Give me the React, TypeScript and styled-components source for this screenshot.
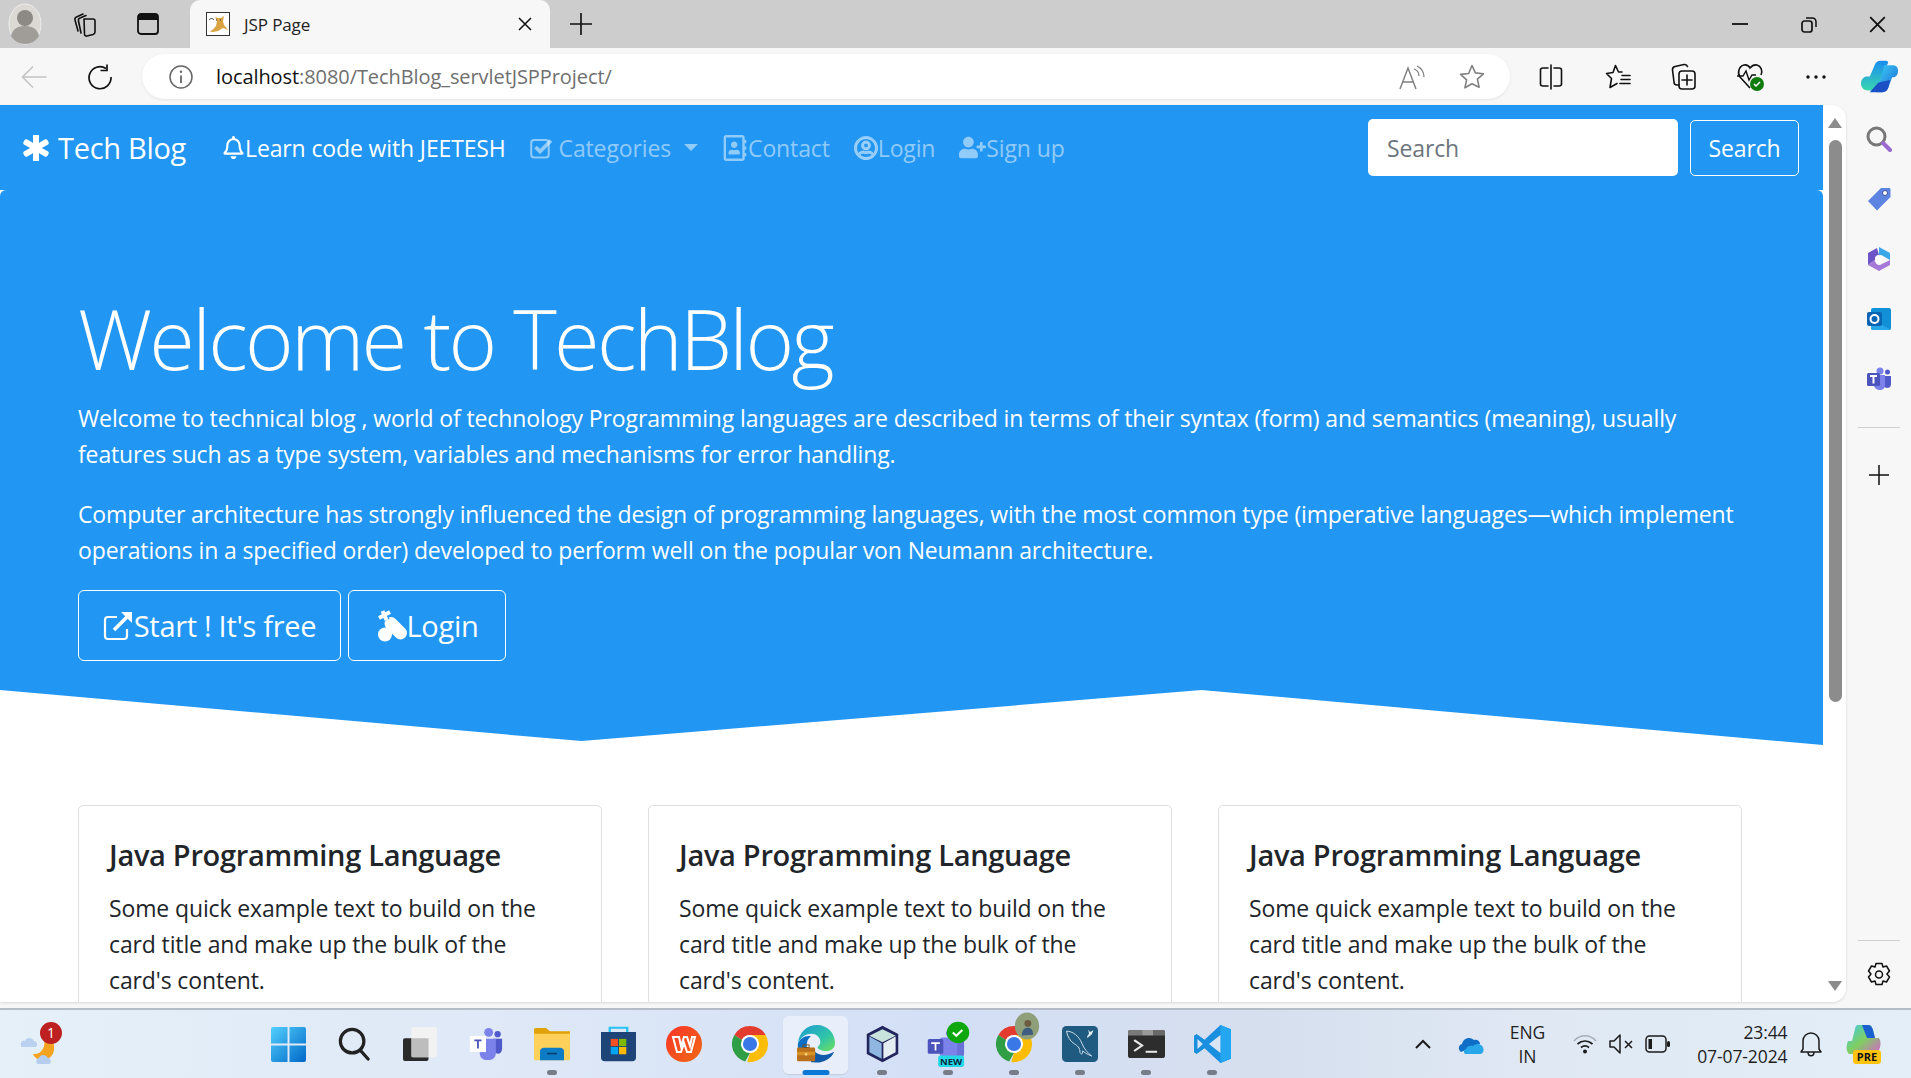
import React from "react";
import styled, { createGlobalStyle } from "styled-components";
import { FaAsterisk, FaRegBell, FaRegAddressBook, FaRegUserCircle, FaUserPlus } from "react-icons/fa";

const Global = createGlobalStyle`
  html, body { margin: 0; padding: 0; width: 100%; height: 100%; overflow: hidden; }
  body { font-family: "Open Sans", "Noto Sans", "Liberation Sans", sans-serif; color: #212529; }
  * { box-sizing: border-box; }
`;

const Screen = styled.div`
  width: 1911px; height: 1078px; display: flex; flex-direction: column; background: #f7f7f7; overflow: hidden;
`;

/* ---------- browser chrome ---------- */
const TitleBar = styled.div`
  height: 48px; flex: none; background: #cdcdcd; display: flex; align-items: center;
`;
const Slot = styled.div<{ $w?: number }>`
  width: ${p => p.$w ?? 66}px; flex: none; display: flex; align-items: center; justify-content: center; height: 100%; position: relative;
`;
const Tab = styled.div`
  width: 360px; height: 48px; margin-left: 8px; background: #f7f7f7; border-radius: 10px 10px 0 0; display: flex; align-items: center; padding: 0 18px 0 16px; gap: 14px; flex: none;
`;
const TabTitle = styled.span`
  font-size: 17px; letter-spacing: -.1px; flex: 1; color: #222;
`;
const Spacer = styled.div`
  flex: 1;
`;
const Toolbar = styled.div`
  height: 57px; flex: none; background: #f7f7f7; display: flex; align-items: center; padding-left: 1px;
`;
const AddressBar = styled.div`
  width: 1368px; height: 45px; margin-left: 9px; margin-right: 8px; background: #fff; border-radius: 23px; display: flex; align-items: center; padding: 0 0 0 27px; box-shadow: 0 1px 3px rgba(0,0,0,.08); flex: none;
`;
const Url = styled.div`
  margin-left: 23px; font-size: 20px; letter-spacing: -.08px; color: #111; flex: 1;
  span { color: #6f6f6f; }
`;

/* ---------- page ---------- */
const Body = styled.div`
  flex: 1; display: flex; min-height: 0; padding-bottom: 6px;
`;
const Viewport = styled.div`
  width: 1846px; flex: none; background: #fff; border-radius: 0 14px 14px 0; display: flex; overflow: hidden; box-shadow: 0 1px 3px rgba(0,0,0,.12);
`;
const Page = styled.div`
  width: 1823px; flex: none; overflow: hidden;
`;
const Navbar = styled.nav`
  height: 85px; background: #2196f3; display: flex; align-items: center; padding: 0 24px 0 23px;
`;
const Brand = styled.a`
  display: flex; align-items: center; gap: 9px; color: #fff; font-size: 29px; letter-spacing: -.3px; margin-right: 36px;
  svg { stroke: #fff; stroke-width: 34px; }
`;
const NavItem = styled.a<{ $active?: boolean }>`
  display: flex; align-items: center; color: ${p => (p.$active ? "#fff" : "rgba(255,255,255,.5)")}; font-size: 23px; letter-spacing: -.13px; margin-right: 24px; white-space: nowrap;
  svg { flex: none; }
`;
const Caret = styled.i`
  width: 0; height: 0; margin-left: 13px; border-left: 7px solid transparent; border-right: 7px solid transparent; border-top: 7px solid rgba(255,255,255,.5);
`;
const SearchInput = styled.div`
  width: 310px; height: 57px; background: #fff; border-radius: 5px; color: #6c757d; font-size: 23px; letter-spacing: -.13px; display: flex; align-items: center; padding-left: 19px; margin-left: auto;
`;
const SearchButton = styled.button`
  width: 109px; height: 56px; margin-left: 12px; background: transparent; border: 1px solid #fff; border-radius: 5px; color: #fff; font: inherit; font-size: 23px; letter-spacing: -.13px; padding: 0;
`;
const Hero = styled.header`
  height: 555px; background: #2196f3; padding: 95px 78px 0; border-radius: 6px 6px 0 0; color: #fff;
  clip-path: polygon(0 0, 100% 0, 100% 100%, 65.9% 90.1%, 31.9% 99.3%, 0 90.1%);
`;
const HeroTitle = styled.h1`
  margin: 0 0 10px; font-weight: 300; font-size: 83px; line-height: 105px; letter-spacing: -2.7px; white-space: nowrap;
`;
const Lead = styled.p`
  margin: 0 0 24px; font-size: 23px; line-height: 36px; letter-spacing: -.13px; width: 1667px;
`;
const Actions = styled.div`
  display: flex; gap: 7px; margin-top: -2px;
`;
const HeroButton = styled.button<{ $w: number }>`
  width: ${p => p.$w}px; height: 71px; background: transparent; border: 1px solid #fff; border-radius: 6px; color: #fff; font: inherit; font-size: 29px; letter-spacing: -.3px; display: flex; align-items: center; justify-content: center; padding: 0;
`;
const Cards = styled.section`
  display: grid; grid-template-columns: repeat(3, 524px); gap: 46px; padding: 60px 0 0 78px;
`;
const Card = styled.article`
  height: 300px; border: 1px solid rgba(0,0,0,.125); border-radius: 5px; padding: 32px 34px 30px 30px;
`;
const CardTitle = styled.h5`
  margin: 0 0 19px; font-size: 29px; line-height: 33px; font-weight: 600; letter-spacing: -.3px; color: #212529; white-space: nowrap;
`;
const CardText = styled.p`
  margin: 0; font-size: 23px; line-height: 36px; letter-spacing: -.13px; color: #212529;
`;

const Scrollbar = styled.div`
  flex: 1; display: flex; flex-direction: column; align-items: center; padding: 13px 0 11px 1px;
`;
const Thumb = styled.div`
  width: 13px; height: 562px; background: #8c8c8c; border-radius: 7px; margin-top: 12px;
`;
const Arrow = styled.i<{ $down?: boolean }>`
  width: 0; height: 0; border-left: 7.5px solid transparent; border-right: 7.5px solid transparent;
  ${p => (p.$down ? "border-top: 10px solid #8c8c8c; margin-top: auto;" : "border-bottom: 10px solid #8c8c8c;")}
`;
const Sidebar = styled.aside`
  flex: 1; display: flex; flex-direction: column; align-items: center; padding-top: 4px;
`;
const SideSlot = styled.div<{ $h?: number }>`
  height: ${p => p.$h ?? 60}px; width: 100%; flex: none; display: flex; align-items: center; justify-content: center;
`;
const SideRule = styled.div<{ $tight?: boolean }>`
  width: 42px; height: 1px; background: #d0d0d0; flex: none; margin: ${p => (p.$tight ? "0 0 7px" : "18px 0 17px")};
`;
const SideFill = styled.div`
  flex: 1;
`;

/* ---------- taskbar ---------- */
const Taskbar = styled.footer`
  height: 70px; flex: none; border-top: 2px solid #b4bcc8; background: linear-gradient(90deg, #e6f0f9 0%, #dfe9f7 25%, #d3dff6 50%, #d6dfee 66%, #dfe8f3 80%, #e3eef8 100%); display: flex; align-items: center; position: relative;
`;
const Weather = styled.div`
  width: 255px; flex: none; height: 100%; display: flex; align-items: center; padding-left: 21px;
`;
const Apps = styled.div`
  display: flex; height: 100%; flex: none;
`;
const App = styled.div<{ $active?: boolean; $open?: boolean }>`
  width: 66px; height: 100%; flex: none; display: flex; align-items: center; justify-content: center; position: relative;
  ${p => p.$active ? "&::before { content: ''; position: absolute; left: 0; top: 6px; width: 65px; height: 58px; border-radius: 6px; background: rgba(255,255,255,.45); box-shadow: 0 1px 1px rgba(0,0,0,.1); }" : ""}
  ${p => p.$open ? `&::after { content: ''; position: absolute; bottom: 3px; left: 50%; transform: translateX(-50%); height: 5px; border-radius: 3px; width: ${p.$active ? 27 : 10}px; background: ${p.$active ? "#0a78d4" : "#777d88"}; }` : ""}
  svg { position: relative; z-index: 1; }
`;
const Tray = styled.div`
  margin-left: auto; display: flex; align-items: center; height: 100%; padding-right: 16.5px; color: #1b1b1b;
`;
const TrayText = styled.div<{ $align: string; $w: number }>`
  width: ${p => p.$w}px; text-align: ${p => p.$align}; font-size: 17.5px; line-height: 24px; flex: none; color: #1f1f1f; letter-spacing: -.1px;
`;
const TraySlot = styled.div<{ $w: number }>`
  width: ${p => p.$w}px; flex: none; display: flex; align-items: center; justify-content: center;
`;
const ProfileBadge = styled.span`
  position: relative; width: 38px; height: 38px; display: block;
  svg + svg { position: absolute; left: 19px; top: -13px; }
`;

/* ---------- icons ---------- */
const ln = { fill: "none", stroke: "#111", strokeWidth: 1.6, strokeLinecap: "round", strokeLinejoin: "round" } as const;

const Avatar = () => (
  <svg width="34" height="42" viewBox="0 0 34 42">
    <ellipse cx="17" cy="21" rx="16" ry="20" fill="#dcd9d4" stroke="#eee" />
    <circle cx="17" cy="15" r="8" fill="#8d8a86" />
    <path d="M3 33c2-8 8-10 14-10s12 2 14 10c-3 5-8 8-14 8S6 38 3 33z" fill="#a09d99" />
  </svg>
);
const Collections = () => (
  <svg width="26" height="26" viewBox="0 0 26 26"><g {...ln}>
    <path d="M6 20 3 9c-.4-1.500.3-2.500 1.500-3L11 3" /><path d="M9 22 6.500 10c-.4-1.500.3-2.500 1.500-3l6-2.500" /><path d="M12 8h9c1.500 0 2 1 2 2v11c0 1-.6 2-2 2.500L15 25c-1.500.2-2.500-.5-2.500-2z" />
  </g></svg>
);
const TabView = () => (
  <svg width="22" height="22" viewBox="0 0 22 22"><rect x="1" y="1" width="20" height="20" rx="3" fill="none" stroke="#111" strokeWidth="1.800" /><path d="M1 3.500C1 2 2 1 3.500 1h15C20 1 21 2 21 3.500V7H1z" fill="#111" /></svg>
);
const Tomcat = () => (
  <svg width="24" height="24" viewBox="0 0 24 24">
    <rect x=".5" y=".5" width="23" height="23" fill="#fff" stroke="#333" />
    <path d="M2 19c4 1 6-3 8-5l1-5-2-4 3 1h3l3-2-1 5 1 4 4 5-5-2-5 3-5 1z" fill="#d9a441" />
    <path d="M3 8c2-2 4-2 5 0M10 8h1M14 8h1" stroke="#333" fill="none" />
  </svg>
);
const Close = ({ s = 14 }: { s?: number }) => (
  <svg width={s} height={s} viewBox="0 0 14 14"><path d="M1 1l12 12M13 1 1 13" stroke="#111" strokeWidth="1.500" fill="none" /></svg>
);
const Plus = ({ s = 20 }: { s?: number }) => (
  <svg width={s} height={s} viewBox="0 0 20 20"><path d="M10 0v20M0 10h20" stroke="#111" strokeWidth="1.500" /></svg>
);
const Minimize = () => <svg width="16" height="4" viewBox="0 0 16 4"><path d="M0 2h16" stroke="#111" strokeWidth="1.800" /></svg>;
const Restore = () => (
  <svg width="16" height="17" viewBox="0 0 16 17"><rect x="1" y="5" width="10" height="11" rx="2.500" fill="none" stroke="#111" strokeWidth="1.700" /><path d="M5 2h6c2.500 0 4 1.500 4 4v5" fill="none" stroke="#111" strokeWidth="1.500" /></svg>
);
const Back = () => (
  <svg width="26" height="24" viewBox="0 0 26 24"><path d="M1.500 12h24M12 1.500 1.500 12 12 22.500" fill="none" stroke="#c4c4c4" strokeWidth="1.600" /></svg>
);
const Refresh = () => (
  <svg width="26" height="26" viewBox="0 0 26 26"><path d="M19 4.500A11 11 0 1 0 24 13" fill="none" stroke="#111" strokeWidth="1.700" /><path d="M20 .5v6h-6.500" fill="none" stroke="#111" strokeWidth="1.700" /></svg>
);
const Info = () => (
  <svg width="24" height="24" viewBox="0 0 24 24"><circle cx="12" cy="12" r="11" fill="none" stroke="#666" strokeWidth="1.500" /><path d="M12 10.500V18" stroke="#666" strokeWidth="1.800" /><circle cx="12" cy="6.800" r="1.200" fill="#666" /></svg>
);
const ReadAloud = () => (
  <svg width="26" height="26" viewBox="0 0 26 26"><path d="M1 25 9 4l8 21M4 18h10" fill="none" stroke="#808080" strokeWidth="1.500" /><path d="M15 5c3 1 5 4 5 7M18 2c4 2 7 6 7 11" fill="none" stroke="#808080" strokeWidth="1.300" /></svg>
);
const Star = ({ c = "#808080" }: { c?: string }) => (
  <svg width="26" height="25" viewBox="0 0 26 25"><path d="m13 1.500 3.400 7.400 8 .9-6 5.400 1.700 8L13 19.700 5.900 23.800l1.700-8-6-5.400 8-.9z" fill="none" stroke={c} strokeWidth="1.600" strokeLinejoin="round" /></svg>
);
const Split = () => (
  <svg width="24" height="26" viewBox="0 0 24 26"><g {...ln}><path d="M12 1v24" /><path d="M9 4H4C2 4 1.500 5 1.500 6v14c0 1 .5 2 2.500 2h5M15 4h5c2 0 2.500 1 2.500 2v14c0 1-.5 2-2.500 2h-5" /></g></svg>
);
const Favorites = () => (
  <svg width="26" height="26" viewBox="0 0 26 26"><g {...ln}><path d="M17 8h-3.500L10.500 1.500 8 8.500l-6.500 1 5 5L5 23.500l7-4" /><path d="M17 11.500h8M16 15.500h9M15 19.500h10" /></g></svg>
);
const CollectionsAdd = () => (
  <svg width="26" height="28" viewBox="0 0 26 28"><g {...ln}><path d="M8 22H6c-2 0-3-1-3-3L1.500 7c-.2-2 .5-3 2.500-3.500l9-2c2-.3 3 .5 3.500 2" /><rect x="8" y="8" width="16" height="18" rx="3" /><path d="M16 12v10M11 17h10" /></g></svg>
);
const Health = () => (
  <svg width="30" height="30" viewBox="0 0 30 30">
    <path d="M14 26 4 15C1 11 3 4 8 3c3-.5 5 1 6 3 2-2.500 4-3.500 7-3 4 1 6 6 4 10" fill="none" stroke="#111" strokeWidth="1.600" />
    <path d="M1 14h6l3-5 3 9 3-5h4" fill="none" stroke="#111" strokeWidth="1.400" />
    <circle cx="21" cy="22" r="7" fill="#107c10" /><path d="m18 22 2 2 4-4" fill="none" stroke="#fff" strokeWidth="1.500" />
  </svg>
);
const Dots = () => <svg width="20" height="4" viewBox="0 0 20 4"><circle cx="2" cy="2" r="1.700" fill="#111" /><circle cx="10" cy="2" r="1.700" fill="#111" /><circle cx="18" cy="2" r="1.700" fill="#111" /></svg>;
const Copilot = () => (
  <svg width="37" height="33" viewBox="0 0 38 38" preserveAspectRatio="none">
    <defs>
      <linearGradient id="cpa" x1="0" y1="0" x2="0" y2="1"><stop offset="0" stopColor="#1a8cf0" /><stop offset="1" stopColor="#3ad6b0" /></linearGradient>
      <linearGradient id="cpb" x1="0" y1="0" x2="1" y2="1"><stop offset="0" stopColor="#3fd0f5" /><stop offset="1" stopColor="#1767d6" /></linearGradient>
    </defs>
    <path d="M26 1h-6c-3 0-5 2-6 5L9 19H5c-3 1-5 4-5 8 0 5 3 8 7 8h5l6-6 4-12 6-14c-.5-1-1-2-2-2z" fill="url(#cpa)" />
    <path d="M16 37h6c3 0 5-2 6-5l4-12h2c2-1 4-3 4-8 0-4-2-6-6-6h-8l-4 16z" fill="url(#cpb)" />
    <path d="M9 37h13c3 0 5-2 6-5l2-9-12 3-5 6z" fill="#1c4fc4" />
  </svg>
);

const SearchColor = () => (
  <svg width="26" height="26" viewBox="0 0 26 26"><circle cx="10.500" cy="10.500" r="8.500" fill="none" stroke="#777" strokeWidth="3" /><path d="m17 17 7 7" stroke="#9a6ad0" strokeWidth="4" strokeLinecap="round" /></svg>
);
const TagIcon = () => (
  <svg width="24" height="24" viewBox="0 0 24 24"><path d="M1 14 14 1h8c1 0 1.500.5 1.500 1.500V10L10 23.500z" fill="#5c84e0" /><circle cx="18" cy="6" r="2.500" fill="#fff" stroke="#3d4f9c" /></svg>
);
const M365 = () => (
  <svg width="24" height="26" viewBox="0 0 24 26">
    <path d="M12 1 23 7v7l-7-4a5 5 0 0 0-4-1z" fill="#3aa8e8" /><path d="M1 7l9-5 2 7c-3 1-4 3-4 5l-7 5z" fill="#6d55c8" /><path d="M1 19l7-5c0 3 2 5 5 5l10-5v5l-11 6z" fill="#a679d9" /><circle cx="12" cy="13" r="4" fill="#fff" />
  </svg>
);
const Outlook = () => (
  <svg width="24" height="24" viewBox="0 0 24 24"><rect x="4" y="1" width="20" height="22" rx="2" fill="#1190d8" /><path d="M4 12 24 23H6c-1 0-2-1-2-2z" fill="#28a8ea" /><rect x="0" y="5" width="15" height="14" rx="2" fill="#0a64b4" /><circle cx="7.500" cy="12" r="4" fill="none" stroke="#fff" strokeWidth="2" /></svg>
);
const TeamsSide = () => (
  <svg width="24" height="24" viewBox="0 0 24 24"><circle cx="13" cy="4" r="3.500" fill="#7b83eb" /><circle cx="20.500" cy="5" r="2.500" fill="#5059c9" /><path d="M17 9h7v8c0 3-2 4-4 4l-3-1z" fill="#5059c9" /><path d="M7 8h11v10c0 3-2 5-5 5s-6-2-6-5z" fill="#7b83eb" /><rect x="0" y="6" width="13" height="13" rx="1.500" fill="#4b53bc" /><path d="M3 9h7M6.500 9v7.500" stroke="#fff" strokeWidth="2" /></svg>
);
const Gear = () => (
  <svg width="24" height="26" viewBox="0 0 24 26"><g {...ln} strokeWidth="1.500"><path d="M9 1.500h6l1 3.500 3.500-1 3 5-2.600 3 2.600 3-3 5-3.500-1-1 3.500H9l-1-3.500-3.500 1-3-5L4 12 1.500 9l3-5L8 5z" /><circle cx="12" cy="12.500" r="3.500" /></g></svg>
);
const CheckSquare = () => (
  <svg width="23" height="22" viewBox="0 0 23 22" style={{ flex: "none" }}>
    <rect x="1.200" y="3" width="17.500" height="17.500" rx="3" fill="none" stroke="currentColor" strokeWidth="2" />
    <path d="m5.500 10 4.500 4.500L21 3.500" fill="none" stroke="currentColor" strokeWidth="3.800" />
  </svg>
);

const WeatherIcon = () => (
  <svg width="42" height="44" viewBox="0 0 42 44">
    <path d="M26 18c2 8-2 17-11 16 1 3 5 6 9 6 8 0 13-6 12-14l-1-6z" fill="#f5a21e" transform="translate(-3 -2)" />
    <path d="M0 25c-2-4 1-7 4-6 1-4 7-4 9 0 3 0 4 4 2 6z" fill="#b9d0ef" />
    <path d="M17 42c-3-1-2-6 1-6 1-4 7-4 9 0 3 0 4 5 1 6z" fill="#b5cdee" />
    <circle cx="30" cy="11" r="11" fill="#bd2020" />
    <text x="30" y="16" textAnchor="middle" fontSize="14" fill="#fff" fontFamily="Open Sans, sans-serif">1</text>
  </svg>
);
const Windows = () => (
  <svg width="35" height="35" viewBox="0 0 36 36">
    <defs><linearGradient id="win" x1="0" y1="0" x2="1" y2="1"><stop offset="0" stopColor="#52cffc" /><stop offset="1" stopColor="#0068c8" /></linearGradient></defs>
    <path d="M2 0h15v17H0V2a2 2 0 0 1 2-2zM19 0h15a2 2 0 0 1 2 2v15H19zM0 19h17v17H2a2 2 0 0 1-2-2zM19 19h17v15a2 2 0 0 1-2 2H19z" fill="url(#win)" />
  </svg>
);
const SearchTask = () => (
  <svg width="32" height="34" viewBox="0 0 34 36"><circle cx="15" cy="15" r="12.500" fill="none" stroke="#222" strokeWidth="3.400" /><path d="m24 25 8 9" stroke="#222" strokeWidth="3.400" strokeLinecap="round" /></svg>
);
const TaskView = () => (
  <svg width="36" height="34" viewBox="0 0 36 36"><rect x="0" y="12" width="27" height="24" rx="2" fill="#2a2a2a" /><rect x="9" y="0" width="27" height="32" rx="2" fill="#f2f2f2" opacity=".95" /><rect x="9" y="12" width="18" height="20" fill="#bdbdbd" /></svg>
);
const TeamsTask = () => (
  <svg width="36" height="34" viewBox="0 0 36 38"><circle cx="21" cy="6" r="5" fill="#7b83eb" /><circle cx="31" cy="8" r="3.500" fill="#5059c9" /><path d="M26 13h10v11c0 4-2 6-5 6l-5-2z" fill="#5059c9" /><path d="M11 13h18v16c0 5-3 8-9 8s-9-3-9-8z" fill="#7b83eb" /><rect x="0" y="10" width="18" height="18" fill="#fff" /><path d="M5 15h8M9 15v9" stroke="#4b53bc" strokeWidth="2" /></svg>
);
const Folder = () => (
  <svg width="36" height="33" viewBox="0 0 36 40" preserveAspectRatio="none"><path d="M0 2a2 2 0 0 1 2-2h10l4 4h20v6H0z" fill="#e0a208" /><path d="M0 7h36v31a1 1 0 0 1-1 1H1a1 1 0 0 1-1-1z" fill="#ffd05a" /><path d="M6 39V28c0-2 2-4 4-4h16c2 0 4 2 4 4v11z" fill="#0e7cc4" /><path d="M13 31h10" stroke="#063e74" strokeWidth="2" /></svg>
);
const Store = () => (
  <svg width="35" height="36" viewBox="0 0 36 42" preserveAspectRatio="none"><path d="M9 8V2h18v6" fill="none" stroke="#26c2f0" strokeWidth="2.400" /><path d="M0 7h36v30a4 4 0 0 1-4 4H4a4 4 0 0 1-4-4z" fill="#1e4478" /><rect x="10" y="15" width="7.500" height="8.500" fill="#f25022" /><rect x="18.500" y="15" width="7.500" height="8.500" fill="#7fba00" /><rect x="10" y="24.500" width="7.500" height="8.500" fill="#00a4ef" /><rect x="18.500" y="24.500" width="7.500" height="8.500" fill="#ffb900" /></svg>
);
const Wps = () => (
  <svg width="36" height="36" viewBox="0 0 36 36"><defs><linearGradient id="wps" x1="0" y1="0" x2="1" y2="1"><stop offset="0" stopColor="#f8332a" /><stop offset="1" stopColor="#f06a14" /></linearGradient></defs><circle cx="18" cy="18" r="18" fill="url(#wps)" /><path d="M7 11h6l2 9 3-9h3l3 9 2-9h3l-4 15h-4l-3-9-3 9h-4z" fill="none" stroke="#fff" strokeWidth="2" /></svg>
);
const Chrome = () => (
  <svg width="38" height="38" viewBox="0 0 42 42">
    <path d="M21 1a20 20 0 0 1 17.300 10H21a10 10 0 0 0-9 5.500L3.700 11A20 20 0 0 1 21 1z" fill="#e33b2e" />
    <path d="M3.700 11 12 16.500 21 31l-5.400 9.300A20 20 0 0 1 3.700 11z" fill="#2f9e44" />
    <path d="M38.300 11A20 20 0 0 1 18 40.800L21 31l9-15-9-5z" fill="#fbbc04" />
    <circle cx="21" cy="21" r="10" fill="#fff" /><circle cx="21" cy="21" r="7.800" fill="#3b78e7" />
  </svg>
);
const Edge = () => (
  <svg width="38" height="38" viewBox="0 0 44 44">
    <defs><linearGradient id="edge" x1="0" y1="0" x2="1" y2="1"><stop offset="0" stopColor="#1a9ad6" /><stop offset=".6" stopColor="#31c4a8" /><stop offset="1" stopColor="#6ee05a" /></linearGradient></defs>
    <path d="M1 22C2 8 12 0 23 0c12 0 21 9 21 21 0 6-5 9-10 9-6 0-10-2-10-4 0-2 3-2 3-7 0-5-5-9-10-9C9 10 3 15 1 22z" fill="url(#edge)" />
    <path d="M1 22c2-6 8-10 15-9-5 4-6 11-3 18l-12 3z" fill="#0c6fc4" />
    <path d="M19 43c8 2 20-2 24-12-8 5-18 5-23-1l-4 13z" fill="#0f5aa8" />
    <rect x="0" y="26" width="21" height="16" rx="1.500" fill="#b9701d" /><rect x="0" y="31" width="21" height="4" fill="#d99226" /><rect x="7" y="23" width="7" height="3" fill="none" stroke="#7a4a12" /><circle cx="10.500" cy="34" r="1.500" fill="#ffd780" />
  </svg>
);
const Box = () => (
  <svg width="35" height="38" viewBox="0 0 40 46" preserveAspectRatio="none">
    <path d="M20 1 38 11v24L20 45 2 35V11z" fill="#23255e" />
    <path d="M20 5 35 13 20 21 5 13z" fill="#c7e3dc" /><path d="M5 14 19 22v19L5 33z" fill="#8fb7e0" /><path d="M35 14 21 22v19l14-8z" fill="#e4eef2" />
  </svg>
);
const TeamsNew = () => (
  <svg width="45" height="46" viewBox="0 0 52 56" preserveAspectRatio="none">
    <circle cx="28" cy="15" r="5" fill="#7b83eb" /><rect x="26" y="20" width="18" height="24" rx="4" fill="#6a72d8" /><rect x="16" y="20" width="20" height="24" rx="3" fill="#7b83eb" />
    <rect x="2" y="22" width="18" height="18" rx="2" fill="#4b53bc" /><path d="M6 27h10M11 27v9" stroke="#fff" strokeWidth="2" />
    <circle cx="37" cy="14" r="13" fill="#0ea80e" /><path d="m31 14 4 4 7-7" stroke="#fff" strokeWidth="2.400" fill="none" />
    <rect x="14" y="42" width="30" height="14" rx="3" fill="#26d9e8" /><text x="29" y="53" fontSize="11" fontWeight="700" textAnchor="middle" fontFamily="Open Sans, sans-serif" fill="#0a2a40">NEW</text>
  </svg>
);
const ChromeProfile = () => (
  <ProfileBadge>
    <Chrome />
    <svg width="26" height="28" viewBox="0 0 30 32">
      <ellipse cx="15" cy="16" rx="14" ry="15.500" fill="#8f9f7a" /><circle cx="16" cy="13" r="4" fill="#6e5c42" /><path d="M9 27c0-6 3-9 7-9s6 3 6 8z" fill="#3e5d80" />
    </svg>
  </ProfileBadge>
);
const MySql = () => (
  <svg width="36" height="36" viewBox="0 0 40 42" preserveAspectRatio="none">
    <rect width="40" height="42" rx="5" fill="#1f5a80" />
    <path d="M5 6c7 0 14 6 17 14 2 6 7 12 11 15-5-2-8-4-10-6 0 4-1 5-3 2 0-6-3-8-6-10C9 18 6 12 5 6z" fill="none" stroke="#cfe0ea" strokeWidth="1.100" />
    <path d="M29 4l2 3 4-2-2 5-5 4 0-2 2-3z" fill="#dfeaf0" />
  </svg>
);
const Terminal = () => (
  <svg width="37" height="28" viewBox="0 0 42 36" preserveAspectRatio="none"><rect width="42" height="36" rx="3" fill="#2d2d2d" /><path d="M0 3a3 3 0 0 1 3-3h13v7H0z" fill="#7a7a7a" /><rect x="16" width="13" height="7" fill="#9a9a9a" /><path d="M29 0h10a3 3 0 0 1 3 3v4H29z" fill="#6a6a6a" /><path d="m7 13 9 7-9 7" fill="none" stroke="#e8e8e8" strokeWidth="2.600" /><path d="M20 28h13" stroke="#e8e8e8" strokeWidth="2.600" /></svg>
);
const VsCode = () => (
  <svg width="37" height="38" viewBox="0 0 42 46" preserveAspectRatio="none">
    <path d="M30 0 12 18 3 11 0 13v20l3 2 9-7 18 18 12-5V5z" fill="#1a8fe0" />
    <path d="M30 0v46l12-5V5z" fill="#25a6f0" />
    <path d="M30 12 17 23l13 11z" fill="#d7e5f6" /><path d="M4 17l6 6-6 6z" fill="#d7e5f6" />
  </svg>
);
const Chevron = () => <svg width="18" height="12" viewBox="0 0 18 12"><path d="M2 10 9 3l7 7" fill="none" stroke="#1b1b1b" strokeWidth="2" /></svg>;
const OneDrive = () => (
  <svg width="26" height="20" viewBox="0 0 26 20"><path d="M3 18C0 16 0 11 4 10c1-6 8-8 12-4 3-1 6 1 6 4z" fill="#0f6fc6" /><path d="M7 20H22c4 0 5-6 1-9-3-2-6-1-8 1-3-1-6 0-7 3-2 0-3 3-1 5z" fill="#28a8ea" /></svg>
);
const Wifi = () => (
  <svg width="24" height="20" viewBox="0 0 24 20"><path d="M1 7c6-7 16-7 22 0" fill="none" stroke="#a9adb5" strokeWidth="1.500" /><path d="M4.500 10c4.500-4 10.500-4 15 0M8 13.500c2.500-2 5.500-2 8 0" fill="none" stroke="#1b1b1b" strokeWidth="1.700" /><circle cx="12" cy="17.500" r="2" fill="#1b1b1b" /></svg>
);
const Mute = () => (
  <svg width="24" height="20" viewBox="0 0 24 20"><path d="M1 7v6h4l6 6V1L5 7z" fill="none" stroke="#1b1b1b" strokeWidth="1.500" strokeLinejoin="round" /><path d="m16 7 7 7M23 7l-7 7" stroke="#1b1b1b" strokeWidth="1.500" /></svg>
);
const Battery = () => (
  <svg width="25" height="18" viewBox="0 0 25 18"><rect x="1" y="1" width="20" height="16" rx="3.500" fill="none" stroke="#1b1b1b" strokeWidth="1.500" /><rect x="3.500" y="4" width="3.500" height="10" fill="#1b1b1b" /><rect x="22" y="6" width="3" height="6" rx="1.500" fill="#1b1b1b" /></svg>
);
const BellOutline = () => (
  <svg width="22" height="26" viewBox="0 0 22 26"><path d="M3 18V10a8 8 0 0 1 16 0v8l2 3H1zM8 21c0 5 6 5 6 0" fill="none" stroke="#1b1b1b" strokeWidth="1.500" strokeLinejoin="round" /></svg>
);
const CopilotPre = () => (
  <svg width="36" height="40" viewBox="0 0 36 40">
    <defs><linearGradient id="cpp" x1="0" y1="0" x2="1" y2="1"><stop offset="0" stopColor="#3ec8e8" /><stop offset=".5" stopColor="#7fd060" /><stop offset="1" stopColor="#d85fd0" /></linearGradient></defs>
    <path d="M12 1h10c3 0 4 2 5 5l2 8h4c2 3 2 8 0 12l-3 4H3c-3-3-3-8-1-13h4l3-12c.4-2 1-4 3-4z" fill="url(#cpp)" />
    <path d="M16 1h6c3 0 4 2 5 5l2 8h-8z" fill="#1a5fd0" />
    <rect x="7" y="26" width="28" height="14" rx="3" fill="#ffc20e" /><text x="21" y="37" fontSize="11" fontWeight="700" textAnchor="middle" fontFamily="Open Sans, sans-serif" fill="#111">PRE</text>
  </svg>
);
const ExternalLink = () => (
  <svg width="31" height="31" viewBox="0 0 31 31" style={{ flex: "none" }}>
    <path d="M24 19v7a3 3 0 0 1-3 3H5a3 3 0 0 1-3-3V10a3 3 0 0 1 3-3h9" fill="none" stroke="#fff" strokeWidth="2.200" />
    <path d="M11 20 26 5" stroke="#fff" strokeWidth="3.600" /><path d="M18 2h11v11z" fill="#fff" />
  </svg>
);
const LoginGlyph = () => (
  <svg width="31" height="33" viewBox="0 0 31 33" style={{ flex: "none" }}>
    <circle cx="9" cy="25.500" r="7" fill="#fff" />
    <path d="M15 14.500 24.500 24" stroke="#fff" strokeWidth="13" strokeLinecap="round" />
    <path d="m3 9 11-6M6.500 2l4 9" stroke="#2196f3" strokeWidth="6.500" />
    <path d="m3 9 11-6M6.500 2l4 9" stroke="#fff" strokeWidth="4" />
  </svg>
);

const apps: [React.ReactNode, boolean?, boolean?][] = [
  [<Windows />], [<SearchTask />], [<TaskView />], [<TeamsTask />], [<Folder />, true], [<Store />], [<Wps />], [<Chrome />],
  [<Edge />, true, true], [<Box />, true], [<TeamsNew />, true], [<ChromeProfile />, true], [<MySql />, true], [<Terminal />, true], [<VsCode />, true],
];
const leads = [
  "Welcome to technical blog , world of technology Programming languages are described in terms of their syntax (form) and semantics (meaning), usually features such as a type system, variables and mechanisms for error handling.",
  "Computer architecture has strongly influenced the design of programming languages, with the most common type (imperative languages—which implement operations in a specified order) developed to perform well on the popular von Neumann architecture.",
];

export default function AppRoot() {
  return (
    <Screen>
      <Global />
      <TitleBar>
        <Slot $w={50}><Avatar /></Slot>
        <Slot $w={70}><Collections /></Slot>
        <Slot $w={56}><TabView /></Slot>
        <Slot $w={6} />
        <Tab><Tomcat /><TabTitle>JSP Page</TabTitle><Close /></Tab>
        <Slot $w={62}><Plus s={22} /></Slot>
        <Spacer />
        <Slot $w={68}><Minimize /></Slot>
        <Slot $w={69}><Restore /></Slot>
        <Slot $w={68}><Close s={17} /></Slot>
      </TitleBar>
      <Toolbar>
        <Slot><Back /></Slot>
        <Slot><Refresh /></Slot>
        <AddressBar>
          <Info />
          <Url>localhost<span>:8080/TechBlog_servletJSPProject/</span></Url>
          <Slot $w={60}><ReadAloud /></Slot>
          <Slot $w={60}><Star /></Slot>
          <Slot $w={8} />
        </AddressBar>
        <Slot $w={66}><Split /></Slot>
        <Slot $w={67}><Favorites /></Slot>
        <Slot $w={66}><CollectionsAdd /></Slot>
        <Slot $w={67}><Health /></Slot>
        <Slot $w={64}><Dots /></Slot>
        <Slot $w={63}><Copilot /></Slot>
      </Toolbar>
      <Body>
        <Viewport>
          <Page>
            <Navbar>
              <Brand><FaAsterisk size={26} />Tech Blog</Brand>
              <NavItem $active><FaRegBell size={23} />Learn code with JEETESH</NavItem>
              <NavItem><CheckSquare />&nbsp;Categories<Caret /></NavItem>
              <NavItem><FaRegAddressBook size={26} />Contact</NavItem>
              <NavItem><FaRegUserCircle size={24} stroke="currentColor" strokeWidth={16} />Login</NavItem>
              <NavItem><FaUserPlus size={27} />Sign up</NavItem>
              <SearchInput>Search</SearchInput>
              <SearchButton>Search</SearchButton>
            </Navbar>
            <Hero>
              <HeroTitle>Welcome to TechBlog</HeroTitle>
              {leads.map(l => <Lead key={l}>{l}</Lead>)}
              <Actions>
                <HeroButton $w={263}><ExternalLink />Start ! It's free</HeroButton>
                <HeroButton $w={158}><LoginGlyph />Login</HeroButton>
              </Actions>
            </Hero>
            <Cards>
              {[0, 1, 2].map(i => (
                <Card key={i}>
                  <CardTitle>Java Programming Language</CardTitle>
                  <CardText>Some quick example text to build on the card title and make up the bulk of the card's content.</CardText>
                </Card>
              ))}
            </Cards>
          </Page>
          <Scrollbar><Arrow /><Thumb /><Arrow $down /></Scrollbar>
        </Viewport>
        <Sidebar>
          <SideSlot><SearchColor /></SideSlot>
          <SideSlot><TagIcon /></SideSlot>
          <SideSlot><M365 /></SideSlot>
          <SideSlot><Outlook /></SideSlot>
          <SideSlot><TeamsSide /></SideSlot>
          <SideRule />
          <SideSlot><Plus /></SideSlot>
          <SideFill />
          <SideRule $tight />
          <SideSlot $h={54}><Gear /></SideSlot>
        </Sidebar>
      </Body>
      <Taskbar>
        <Weather><WeatherIcon /></Weather>
        <Apps>
          {apps.map(([icon, open, active], i) => <App key={i} $open={open} $active={active}>{icon}</App>)}
        </Apps>
        <Tray>
          <TraySlot $w={48}><Chevron /></TraySlot>
          <TraySlot $w={48}><OneDrive /></TraySlot>
          <TrayText $align="center" $w={66}>ENG<br />IN</TrayText>
          <TraySlot $w={48}><Wifi /></TraySlot>
          <TraySlot $w={24}><Mute /></TraySlot>
          <TraySlot $w={50}><Battery /></TraySlot>
          <TrayText $align="right" $w={105}>23:44<br />07-07-2024</TrayText>
          <TraySlot $w={46}><BellOutline /></TraySlot>
          <TraySlot $w={61}><CopilotPre /></TraySlot>
        </Tray>
      </Taskbar>
    </Screen>
  );
}
